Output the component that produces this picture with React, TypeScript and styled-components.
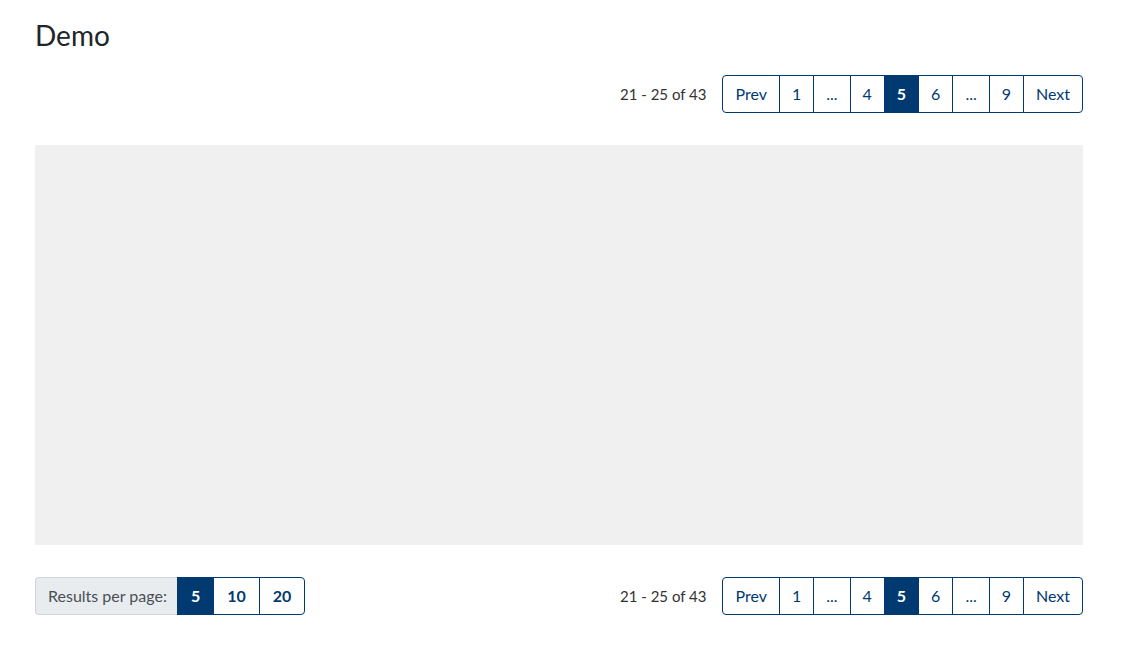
import React from "react";
import styled, { createGlobalStyle, css } from "styled-components";

const GlobalStyle = createGlobalStyle`
  html, body { margin: 0; padding: 0; background: #ffffff; }
  body { font-family: Lato, "Open Sans", Arial, sans-serif; color: #212529; }
  * { box-sizing: border-box; }
`;

const NAVY = "#003a70";

const Page = styled.div`
  width: 1048px;
  margin-left: 35px;
  padding-top: 19px;
  display: flex;
  flex-direction: column;
`;

const Title = styled.h1`
  margin: 0;
  font-size: 28px;
  line-height: 1.2;
  font-weight: 400;
  color: #212529;
`;

const Toolbar = styled.div<{ $split?: boolean }>`
  display: flex;
  align-items: center;
  justify-content: ${(p) => (p.$split ? "space-between" : "flex-end")};
  height: 38px;
`;

const TopToolbar = styled(Toolbar)`
  margin-top: 22px;
`;

const Pager = styled.div`
  display: flex;
  align-items: center;
  gap: 16px;
`;

const Summary = styled.span`
  font-size: 15px;
  color: #333333;
`;

const Group = styled.div`
  display: flex;
  height: 38px;
`;

const PageButton = styled.button<{ $active?: boolean; $bold?: boolean }>`
  font-family: Lato, "Open Sans", Arial, sans-serif;
  font-size: 16px;
  font-weight: 400;
  height: 38px;
  min-width: 34px;
  padding: 0 12px;
  margin: 0 0 0 -1px;
  border: 1px solid ${NAVY};
  background: #ffffff;
  color: ${NAVY};
  display: flex;
  align-items: center;
  justify-content: center;
  cursor: pointer;
  position: relative;
  &:first-child { margin-left: 0; border-radius: 4px 0 0 4px; }
  &:last-child { border-radius: 0 4px 4px 0; }
  ${(p) =>
    p.$bold &&
    css`
      font-weight: 700;
      min-width: 37px;
      padding: 0 13px;
    `}
  ${(p) =>
    p.$active &&
    css`
      background: ${NAVY};
      color: #ffffff;
      font-weight: 700;
      z-index: 1;
    `}
`;

const Canvas = styled.div`
  margin: 32px 0;
  height: 400px;
  background: #f0f0f0;
`;

const PerPage = styled.div`
  display: flex;
  height: 38px;
`;

const PerPageLabel = styled.span`
  display: flex;
  align-items: center;
  padding: 0 10px 0 12px;
  font-size: 16px;
  color: #4a4f55;
  background: #e9ecef;
  border: 1px solid #ced4da;
  border-right: none;
  border-radius: 4px 0 0 4px;
`;

const SizeGroup = styled.div`
  display: flex;
  & > button:first-child { margin-left: 0; border-radius: 0; }
  & > button:last-child { border-radius: 0 4px 4px 0; }
`;

type Item = { label: string; active?: boolean };

const items: Item[] = [
  { label: "Prev" },
  { label: "1" },
  { label: "..." },
  { label: "4" },
  { label: "5", active: true },
  { label: "6" },
  { label: "..." },
  { label: "9" },
  { label: "Next" },
];

function Pagination() {
  return (
    <Pager>
      <Summary>21 - 25 of 43</Summary>
      <Group>
        {items.map((it, i) => (
          <PageButton key={i} $active={it.active}>
            {it.label}
          </PageButton>
        ))}
      </Group>
    </Pager>
  );
}

export default function App() {
  return (
    <>
      <GlobalStyle />
      <Page>
        <Title>Demo</Title>
        <TopToolbar>
          <Pagination />
        </TopToolbar>
        <Canvas />
        <Toolbar $split>
          <PerPage>
            <PerPageLabel>Results per page:</PerPageLabel>
            <SizeGroup>
              <PageButton $bold $active>5</PageButton>
              <PageButton $bold>10</PageButton>
              <PageButton $bold>20</PageButton>
            </SizeGroup>
          </PerPage>
          <Pagination />
        </Toolbar>
      </Page>
    </>
  );
}
